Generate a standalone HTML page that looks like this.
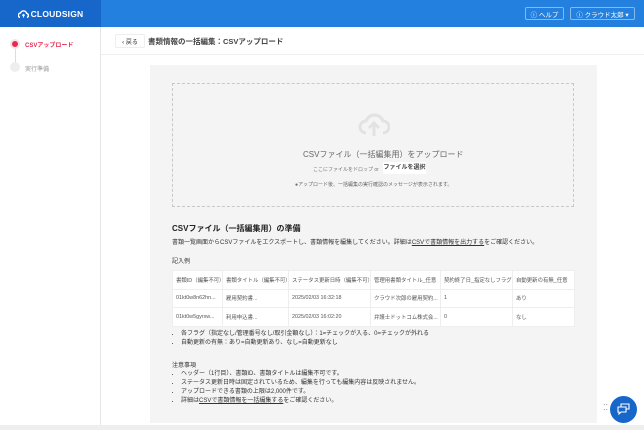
<!DOCTYPE html>
<html><head><meta charset="utf-8"><style>
*{box-sizing:border-box;margin:0;padding:0}
body{width:644px;height:430px;overflow:hidden;background:#fff;font-family:"Liberation Sans","Noto Sans CJK JP",sans-serif;color:#333;position:relative}
.hdr{position:absolute;left:0;top:0;width:644px;height:27px;background:#2480de}
.logo{position:absolute;left:0;top:0;width:101px;height:27px;background:#1766c9;color:#fff;font-weight:bold;font-size:8.5px;display:flex;align-items:center;justify-content:center;letter-spacing:.2px}
.hbtn{position:absolute;top:7px;height:13px;border:1px solid rgba(255,255,255,.45);border-radius:2px;color:#fff;font-size:6.5px;display:flex;align-items:center;justify-content:center}
.side{position:absolute;left:0;top:27px;width:101px;height:403px;border-right:1px solid #e6e6e6;background:#fff}
.sub{position:absolute;left:101px;top:27px;width:543px;height:28px;border-bottom:1px solid #eee;background:#fff}
.panel{position:absolute;left:150px;top:65px;width:447px;height:358px;background:#f4f4f4}
.drop{position:absolute;left:172px;top:83px;width:402px;height:124px;border:1px dashed #c8c8c8;text-align:center}
.t{position:absolute;font-size:6px;color:#333;white-space:nowrap}
table{position:absolute;left:172px;top:270px;width:402px;border-collapse:collapse;background:#fff;font-size:5.4px;color:#555;table-layout:fixed}
td{border:1px solid #eee;height:18.5px;padding:0 3px;white-space:nowrap;overflow:hidden}
ul{position:absolute;left:174px;width:400px;font-size:6px;line-height:9px;color:#333;padding-left:7px;list-style:disc}
u{text-decoration:underline}
</style></head><body>
<div class="hdr"></div>
<div class="logo"><svg width="11" height="8" viewBox="0 0 11 8" style="margin-right:2px"><path d="M2 7.5A2.3 2.3 0 0 1 2.5 3 3.2 3.2 0 0 1 8.6 3.3 2.2 2.2 0 0 1 9 7.5" stroke="#fff" stroke-width="1.4" fill="none"/><path d="M5.5 7.5V4.5M4.3 5.6l1.2-1.2 1.2 1.2" stroke="#fff" stroke-width="1.1" fill="none"/></svg>CLOUDSIGN</div>
<div class="hbtn" style="left:525px;width:39px">ⓘ ヘルプ</div>
<div class="hbtn" style="left:570px;width:65px">ⓘ クラウド太郎 ▾</div>
<div class="side">
<div style="position:absolute;left:15px;top:16px;width:1px;height:24px;background:#ddd"></div>
<div style="position:absolute;left:10px;top:12px;width:10px;height:10px;border-radius:50%;background:#f0e6ea"></div>
<div style="position:absolute;left:12px;top:14px;width:6px;height:6px;border-radius:50%;background:#e8294f"></div>
<div class="t" style="left:25px;top:13px;color:#e8294f;font-weight:bold">CSVアップロード</div>
<div style="position:absolute;left:10px;top:35px;width:10px;height:10px;border-radius:50%;background:#eee"></div>
<div class="t" style="left:25px;top:37px;color:#999">実行準備</div>
</div>
<div class="sub">
<div style="position:absolute;left:14px;top:7px;width:30px;height:14px;border:1px solid #eee;border-radius:2px;font-size:6px;display:flex;align-items:center;justify-content:center">‹ 戻る</div>
<div class="t" style="left:47px;top:9px;font-size:7.5px;font-weight:bold;color:#444">書類情報の一括編集：CSVアップロード</div>
</div>
<div class="panel"></div>
<div class="drop">
<svg width="32" height="28" viewBox="0 0 32 28" style="position:absolute;left:185px;top:26px"><path d="M8 23A6 6 0 0 1 8 11 9 9 0 0 1 25 11 6 6 0 0 1 25 23" stroke="#e2e2e2" stroke-width="3" fill="none"/><path d="M16 26V14M11 18l5-5 5 5" stroke="#e2e2e2" stroke-width="3" fill="none"/></svg>
<div class="t" style="left:130px;top:65px;font-size:8px;color:#666">CSVファイル（一括編集用）をアップロード</div>
<div class="t" style="left:140px;top:82px;font-size:5px;color:#777">ここにファイルをドロップ or</div>
<div style="position:absolute;left:210px;top:78px;width:43px;height:12px;background:#fff;font-size:6px;font-weight:bold;color:#444;line-height:12px">ファイルを選択</div>
<div class="t" style="left:122px;top:97px;font-size:5px;color:#666">●アップロード後、一括編集の実行確認のメッセージが表示されます。</div>
</div>
<div class="t" style="left:172px;top:223px;font-size:8px;font-weight:bold;color:#222">CSVファイル（一括編集用）の準備</div>
<div class="t" style="left:172px;top:237px">書類一覧画面からCSVファイルをエクスポートし、書類情報を編集してください。詳細は<u>CSVで書類情報を出力する</u>をご確認ください。</div>
<div class="t" style="left:172px;top:256px">記入例</div>
<table>
<colgroup><col style="width:50px"><col style="width:66px"><col style="width:82px"><col style="width:70px"><col style="width:72px"><col style="width:62px"></colgroup>
<tr><td style="height:17px">書類ID（編集不可）</td><td>書類タイトル（編集不可）</td><td>ステータス更新日時（編集不可）</td><td>管理用書類タイトル_任意</td><td>契約終了日_指定なしフラグ</td><td>自動更新の有無_任意</td></tr>
<tr><td>01kt0w8n62hn...</td><td>雇用契約書...</td><td>2025/02/03 16:32:18</td><td>クラウド次郎の雇用契約...</td><td>1</td><td>あり</td></tr>
<tr><td>01kt0w5gyrxw...</td><td>利用申込書...</td><td>2025/02/03 16:02:20</td><td>弁護士ドットコム株式会...</td><td>0</td><td>なし</td></tr>
</table>
<ul style="top:330px"><li>各フラグ（指定なし/管理番号なし/取引金額なし）：1=チェックが入る、0=チェックが外れる</li><li>自動更新の有無：あり=自動更新あり、なし=自動更新なし</li></ul>
<div class="t" style="left:172px;top:360px">注意事項</div>
<ul style="top:370px"><li>ヘッダー（1行目）、書類ID、書類タイトルは編集不可です。</li><li>ステータス更新日時は固定されているため、編集を行っても編集内容は反映されません。</li><li>アップロードできる書類の上限は2,000件です。</li><li>詳細は<u>CSVで書類情報を一括編集する</u>をご確認ください。</li></ul>
<div style="position:absolute;left:0;top:425px;width:644px;height:5px;background:#eee"></div>
<div style="position:absolute;left:603px;top:406px;font-size:8px;color:#888;line-height:4px">⁚⁚</div>
<div style="position:absolute;left:610px;top:396px;width:27px;height:27px;border-radius:50%;background:#1766c9"></div>
<svg width="13" height="12" viewBox="0 0 13 12" style="position:absolute;left:617px;top:403px"><path d="M1 4h8v5H4L2 11V9H1z" stroke="#fff" fill="none" stroke-width="1.1"/><path d="M4 4V1h8v5h-3" stroke="#fff" fill="none" stroke-width="1.1"/></svg>
</body></html>
